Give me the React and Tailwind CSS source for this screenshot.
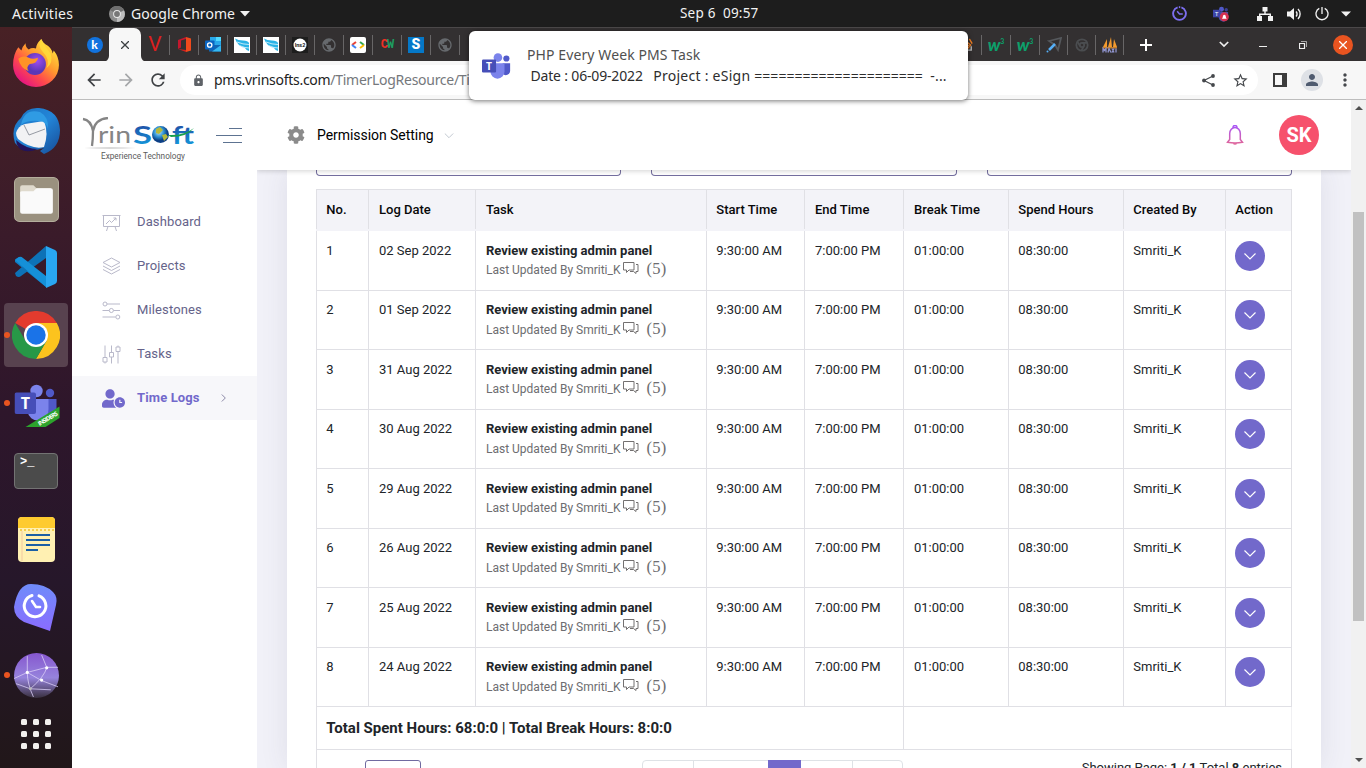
import React from "react";
import {
  MdArrowBack, MdArrowForward, MdRefresh, MdLock, MdStarBorder, MdMoreVert, MdPerson, MdPublic,
} from "react-icons/md";
import { FaCog, FaUserClock } from "react-icons/fa";

const UI = "font-['Noto_Sans',sans-serif]";

/* ---------- desktop top bar ---------- */

function TeamsMark({ className }) {
  return (
    <svg viewBox="0 0 32 28" className={className}>
      <circle cx="17" cy="5" r="4.6" fill="#7b83eb" />
      <circle cx="26" cy="6" r="3.3" fill="#5059c9" />
      <path d="M22 11h8v8a4.5 4.5 0 0 1-8 3z" fill="#5059c9" />
      <path d="M9 11h15v9a7.5 7.5 0 0 1-15 0z" fill="#7b83eb" />
      <rect x="0" y="7" width="15" height="14" rx="1.2" fill="#464eb8" />
      <text x="7.5" y="18" fontSize="11" fontWeight="700" textAnchor="middle" fill="#fff" fontFamily="Open Sans, sans-serif">T</text>
    </svg>
  );
}

function TopBar() {
  return (
    <div className={`relative flex h-[27px] shrink-0 items-center bg-[#1d1d1d] text-[14px] text-[#f2f2f2] ${UI}`}>
      <span className="ml-3 w-[97px] tracking-[0.3px]">Activities</span>
      <svg viewBox="0 0 16 16" className="h-4 w-4">
        <circle cx="8" cy="8" r="8" fill="#8d8d8d" />
        <path d="M8 8 1 4a8 8 0 0 1 14 0z" fill="#6f6f6f" />
        <path d="M8 8 15 4.500a8 8 0 0 1-7 11.500z" fill="#bdbdbd" />
        <circle cx="8" cy="8" r="3.900" fill="#e8e8e8" />
        <circle cx="8" cy="8" r="2.900" fill="#777" />
      </svg>
      <span className="ml-[6px] w-[109px] whitespace-nowrap tracking-[0.05px]">Google Chrome</span>
      <svg viewBox="0 0 10 6" className="h-[6px] w-[10px]"><path d="M0 0h10L5 5.500z" fill="#f2f2f2" /></svg>
      <span className="ml-[430px] whitespace-pre tracking-[0.2px] text-[13.500px]">{"Sep 6  09:57"}</span>
      <div className="absolute inset-y-0 right-[15px] flex items-center">
        <svg viewBox="0 0 16 16" className="mr-[26px] h-[15px] w-[15px]" fill="none" stroke="#7d6ff0" strokeWidth="2">
          <path d="M6 1.500a6.800 6.800 0 1 0 4 0" /><path d="M5.500 5.500 8 8.500h3.500" strokeWidth="1.600" /><path d="M7.300 1.200h1.500" />
        </svg>
        <svg viewBox="0 0 18 16" className="mr-[27px] h-4 w-[17px]">
          <circle cx="9" cy="3" r="2.600" fill="#5059c9" /><circle cx="14" cy="3.500" r="1.800" fill="#3c3f94" />
          <path d="M6 6h10v4a4 4 0 0 1-10 2z" fill="#4b52a8" />
          <rect x="0" y="3.500" width="8" height="8" fill="#3c45a8" />
          <text x="4" y="10" fontSize="6.500" textAnchor="middle" fill="#fff" fontFamily="Open Sans">T</text>
          <circle cx="12" cy="11" r="4.800" fill="#d5304f" />
          <path d="M9.500 13q1-1 1-2.500a1.500 1.800 0 0 1 3 0q0 1.500 1 2.500z" fill="#fff" />
        </svg>
        <svg viewBox="0 0 16 14" className="mr-[14px] h-[14px] w-4" fill="#f2f2f2">
          <path d="M5.500 0h5v4.500H8.700v2H14V9h2v5h-5V9h1.500V8h-9v1H5v5H0V9h2V6.500h5.300v-2H5.500z" />
        </svg>
        <svg viewBox="0 0 15 14" className="mr-[13px] h-[14px] w-[15px]" fill="none" stroke="#f2f2f2">
          <path d="M0 4.500h3L7 1v12L3 9.500H0z" fill="#f2f2f2" stroke="none" />
          <path d="M9 4.500a3.500 3.500 0 0 1 0 5" strokeWidth="1.400" /><path d="M11 2a7 7 0 0 1 0 10" strokeWidth="1.400" />
        </svg>
        <svg viewBox="0 0 14 14" className="mr-[12px] h-[14px] w-[14px]" fill="none" stroke="#f2f2f2" strokeWidth="1.300">
          <path d="M4.300 1.400a6 6 0 1 0 5.400 0M7 0v7" />
        </svg>
        <svg viewBox="0 0 10 6" className="h-[6px] w-[10px]"><path d="M0 .5h10L5 5.500z" fill="#f2f2f2" /></svg>
      </div>
    </div>
  );
}

/* ---------- dock ---------- */

function DockSlot({ dot, active, children }) {
  return (
    <div className="relative flex h-[68px] w-[72px] items-center justify-center">
      {active && <div className="absolute inset-x-1 inset-y-[2px] rounded-[4px] bg-[#58424f]" />}
      {dot && <div className="absolute left-1 top-[31px] h-[6px] w-[6px] rounded-full bg-[#e95420]" />}
      <div className="relative flex">{children}</div>
    </div>
  );
}

function Dock() {
  return (
    <div className="flex w-[72px] shrink-0 flex-col bg-[linear-gradient(#482125,#3a1b2a_28%,#2e162b_52%,#26172a_75%,#211719)] pt-[2px]">
      <DockSlot>
        <svg viewBox="0 0 46 46" className="h-[48px] w-[48px]">
          <defs>
            <linearGradient id="ff" x1=".85" y1=".1" x2=".2" y2=".9"><stop offset="0" stopColor="#ffe33d" /><stop offset=".4" stopColor="#ff9a2e" /><stop offset=".7" stopColor="#ff4a4c" /><stop offset="1" stopColor="#e6187f" /></linearGradient>
            <radialGradient id="ffg" cx=".6" cy=".35"><stop offset="0" stopColor="#a04df0" /><stop offset="1" stopColor="#5b37b7" /></radialGradient>
          </defs>
          <path d="M28 0q-5 5-5 9-4-1-7 1-3-2-3-6-3 3-4 7L6 8Q1 15 1 25a22 21 0 0 0 44 0q0-8-5-14l-1 3Q38 8 32 5 29 3 28 0z" fill="url(#ff)" />
          <circle cx="22" cy="24" r="10.500" fill="url(#ffg)" />
          <path d="M6 19q5-4 10-1 4 2 9 0-1 6-8 6-4 3-1 7-8-3-10-12z" fill="#ff9327" />
          <path d="M28 0q-4 7 2 13 7 7 3 15 7-5 4-14Q32 8 28 0z" fill="#ffdc3b" opacity=".85" />
        </svg>
      </DockSlot>
      <DockSlot>
        <svg viewBox="0 0 48 48" className="h-[48px] w-[48px]">
          <defs><linearGradient id="tb" x1="0" y1="0" x2="1" y2="1"><stop offset="0" stopColor="#1b72bf" /><stop offset=".5" stopColor="#2385d8" /><stop offset="1" stopColor="#174a94" /></linearGradient></defs>
          <path d="M9 11Q14 0 27 1q20 2 21 22 0 18-16 24l-4-3 4-3-8 2Q9 44 3 36-2 20 9 11z" fill="url(#tb)" />
          <path d="M4 26Q6 19 13 17l19-3q5 12 0 26-12 3-26-8-2-3-2-6z" fill="#f2f2f4" />
          <path d="m12 18 5 10 16-6" fill="none" stroke="#8a8f98" strokeWidth=".9" />
          <path d="M9 18Q12 1 28 5q9 5 8 17-2-8-9-8Q15 13 9 18z" fill="#2f9be4" />
          <path d="M4 33q10 9 22 9-12 5-19-1-3-4-3-8z" fill="#22145c" />
        </svg>
      </DockSlot>
      <DockSlot>
        <svg viewBox="0 0 44 44" className="h-[45px] w-[45px]">
          <rect x=".5" y=".5" width="43" height="43" rx="5" fill="#9a917f" stroke="#b5ae9d" />
          <path d="M6 10a2 2 0 0 1 2-2h11l3 3h14v8H6z" fill="#dfdacd" />
          <path d="M6 15q0-1 2-1h11l3-3h14a2 2 0 0 1 2 2v21a2 2 0 0 1-2 2H8a2 2 0 0 1-2-2z" fill="#fafafa" />
        </svg>
      </DockSlot>
      <DockSlot>
        <svg viewBox="0 0 42 42" className="h-[42px] w-[42px]">
          <path d="M0 14q0-1 4-3l27 22v8L0 16z" fill="#0f7dc4" />
          <path d="M31 0 0 27l1 3q3 2 5 0l25-18z" fill="#0d72b7" />
          <path d="M31 41 0 14l4-3q2-1 4 1l23 18z" fill="#1590d8" />
          <path d="m31 0 9 4q2 1 2 3v28q0 2-2 3l-9 4z" fill="#29a7f2" />
        </svg>
      </DockSlot>
      <DockSlot dot active>
        <svg viewBox="0 0 48 48" className="h-[48px] w-[48px]">
          <path d="M24 24 3.200 12a24 24 0 0 1 41.600 0z" fill="#e33b2e" />
          <path d="M24 12h20.800A24 24 0 0 1 24 48l10.400-18z" fill="#fcc31e" />
          <path d="m13.600 30 20.800 0L24 48A24 24 0 0 1 3.200 12z" fill="#279847" />
          <circle cx="24" cy="24" r="12" fill="#fff" /><circle cx="24" cy="24" r="9.700" fill="#1a73e8" />
        </svg>
      </DockSlot>
      <DockSlot dot>
        <svg viewBox="0 0 46 44" className="h-[44px] w-[46px] translate-x-[1.500px] translate-y-[3px]">
          <circle cx="22" cy="7" r="6.200" fill="#7b83eb" /><circle cx="35.500" cy="9" r="4.200" fill="#5059c9" />
          <path d="M32 15h10v12a7 7 0 0 1-9 5z" fill="#5059c9" />
          <path d="M13 15h21v10a10.500 10.500 0 0 1-21 2z" fill="#7b83eb" />
          <rect x="0" y="8.500" width="21.500" height="21.500" rx="2" fill="#464eb8" />
          <text x="10.800" y="25" fontSize="16" fontWeight="700" textAnchor="middle" fill="#fff" fontFamily="Open Sans">T</text>
          <path d="m11 43 34-20.500V34L31 43z" fill="#2ca32c" />
          <text x="0" y="0" fontSize="6" fontWeight="700" fill="#fff" fontFamily="Open Sans" transform="translate(25 42) rotate(-31)" textLength="22">INSIDERS</text>
        </svg>
      </DockSlot>
      <DockSlot>
        <div className="h-[36px] w-[44px] rounded-[4px] border border-[#737373] bg-[#4b4b4b] pl-[5px] font-['Liberation_Mono',monospace] text-[12px] font-bold leading-[16px] text-white">&gt;_</div>
      </DockSlot>
      <DockSlot>
        <svg viewBox="0 0 37 45" className="h-[45px] w-[37px]">
          <rect width="37" height="45" rx="4" fill="#fff0b2" /><path d="M4 0h29a4 4 0 0 1 4 4v7H0V4a4 4 0 0 1 4-4z" fill="#fecb2f" />
          <path d="M2 13h34" stroke="#f4cd4d" strokeWidth="2" strokeDasharray="2 2" /><path d="M4 14v30" stroke="#f3c9a0" />
          <path d="M8 18h24M8 23h24M8 28h24M8 33h12" stroke="#1b5fa5" strokeWidth="2" />
        </svg>
      </DockSlot>
      <DockSlot>
        <svg viewBox="0 0 44 47" className="h-[47px] w-[44px]">
          <defs><linearGradient id="ck" x1="0" y1="0" x2="0" y2="1"><stop offset="0" stopColor="#6f8cfa" /><stop offset="1" stopColor="#8a6cff" /></linearGradient></defs>
          <path d="M17 0q14 0 22 8 5 5 3 13l-6 26-26-9Q0 33 0 23 4 0 17 0z" fill="url(#ck)" />
          <path d="M19.500 10.500a10.800 10.800 0 1 0 7 .3" fill="none" stroke="#fff" strokeWidth="3" strokeLinecap="round" transform="translate(-1.500 1)" />
          <path d="m18 17 4 6h4" fill="none" stroke="#fff" strokeWidth="2.600" strokeLinecap="round" />
        </svg>
      </DockSlot>
      <DockSlot dot>
        <svg viewBox="0 0 44 44" className="h-[45px] w-[45px]">
          <defs><linearGradient id="gl" x1="0" y1="0" x2="0" y2="1"><stop offset="0" stopColor="#8657cf" /><stop offset=".55" stopColor="#9683dc" /><stop offset="1" stopColor="#39303f" /></linearGradient></defs>
          <circle cx="22" cy="22" r="22" fill="url(#gl)" />
          <path d="M13 3v16l14 8 16 6M13 19 0 25M13 19l19-5 11 0M32 14Q30 23 16 35L2 30M32 14 27 2M13 19q0 11 6 24M16 35l20 1" fill="none" stroke="#d8ccf5" strokeWidth=".8" />
          <g fill="#fff"><circle cx="13" cy="19" r="1.600" /><circle cx="32" cy="14.500" r="1.600" /><circle cx="27" cy="26.500" r="1.600" /><circle cx="16" cy="35" r="1.400" fill="#bbb" /></g>
        </svg>
      </DockSlot>
      <div className="mx-auto mt-[10px] grid w-[30px] grid-cols-3 gap-[6px]">
        {Array.from({ length: 9 }, (_, i) => <div key={i} className="h-[6px] w-[6px] rounded-[1.500px] bg-[#f2f0ee]" />)}
      </div>
    </div>
  );
}

/* ---------- browser chrome ---------- */

function Fav({ w = "w-[29px]", children }) {
  return (
    <div className={`flex h-5 shrink-0 items-center justify-center border-r border-[#686667] ${w}`}>{children}</div>
  );
}

function Wing() {
  return (
    <svg viewBox="0 0 16 16" className="h-4 w-4">
      <rect width="16" height="16" fill="#fff" />
      <path d="M1 1.500q3 2 8 2 5 0 6 2.500V14q-3-1-4.500-3.500Q8 10.500 5 8 2.500 6 1 1.500z" fill="#29b3e6" />
      <path d="M3 5q6 2.500 12 2.500M6 8.800q5 2.200 9 2.200" stroke="#fff" strokeWidth=".7" fill="none" />
    </svg>
  );
}

function W3() {
  return (
    <div className="flex items-start font-['Lato',sans-serif] leading-none text-[#0d9f6b]">
      <span className="text-[17px] font-black italic leading-[13px]">w</span><span className="text-[7px] font-bold">3</span>
    </div>
  );
}

function TabStrip() {
  return (
    <div className="flex h-[34px] shrink-0 items-center border-t border-[#4b4849] bg-[#333031]">
      <div className="ml-[8px] flex w-[29px] justify-center">
        <div className="flex h-4 w-4 items-center justify-center rounded-full bg-[#1273de] font-['Lato',sans-serif] text-[12px] font-black text-white">k</div>
      </div>
      <div className="relative flex h-[34px] w-8 items-center justify-center rounded-t-[7px] bg-[#f7f7f7]">
        <svg viewBox="0 0 8 8" className="h-2 w-2" stroke="#3c4043" strokeWidth="1.300"><path d="m0 0 8 8M8 0 0 8" /></svg>
        <svg viewBox="0 0 6 6" className="absolute -left-[6px] bottom-0 h-[6px] w-[6px]"><path d="M6 0v6H0a6 6 0 0 0 6-6z" fill="#f7f7f7" /></svg>
        <svg viewBox="0 0 6 6" className="absolute -right-[6px] bottom-0 h-[6px] w-[6px]"><path d="M0 0v6h6a6 6 0 0 1-6-6z" fill="#f7f7f7" /></svg>
      </div>
      <Fav><span className="font-['Roboto',sans-serif] text-[21px] leading-none text-[#dc1f1f]">V</span></Fav>
      <Fav>
        <svg viewBox="0 0 13 15" className="h-[15px] w-[13px]"><path d="M8 0 0 3v9l3-1.500v-7L8 2z" fill="#c4172d" /><path d="M8 0 13 1.500v12L8 15z" fill="#f04a1c" /><path d="m0 12 8 1v2z" fill="#d1211f" /></svg>
      </Fav>
      <Fav>
        <svg viewBox="0 0 16 16" className="h-4 w-4"><rect x="5" width="11" height="9" fill="#28a8ea" /><path d="M11 0h5v4h-5z" fill="#50d9ff" /><path d="M4 8h12v6.500H4z" fill="#1066b5" /><path d="m16 8-9 6.500h9z" fill="#35b8f1" /><rect y="3.500" width="9.500" height="9" rx=".8" fill="#0a64c0" /><circle cx="4.700" cy="8" r="2.200" fill="none" stroke="#fff" strokeWidth="1.300" /></svg>
      </Fav>
      <Fav><Wing /></Fav>
      <Fav><Wing /></Fav>
      <Fav>
        <svg viewBox="0 0 16 16" className="h-4 w-4"><rect width="16" height="16" fill="#1d1d1d" /><circle cx="8" cy="8" r="6.500" fill="#fff" /><text x="8" y="10" fontSize="5.500" fontWeight="700" textAnchor="middle" fill="#222" fontFamily="Roboto">Ins2</text></svg>
      </Fav>
      <Fav><MdPublic size={16} color="#66696d" /></Fav>
      <Fav>
        <svg viewBox="0 0 16 16" className="h-4 w-4" fill="none" strokeWidth="2"><rect width="16" height="16" rx="2" fill="#fff" /><path d="m6 5-4 3" stroke="#ea4335" /><path d="m2 8 4 3" stroke="#4285f4" /><path d="m10 5 4 3" stroke="#34a853" /><path d="m14 8-4 3" stroke="#fbbc04" /></svg>
      </Fav>
      <Fav><span className="font-['Liberation_Mono',monospace] text-[12px] font-bold leading-none tracking-[-1px] text-[#ee3124]">C<span className="text-[#1d9f62]">W</span></span></Fav>
      <Fav><div className="flex h-4 w-4 items-center justify-center bg-[#0578c8] font-['Roboto',sans-serif] text-[14px] font-black text-white">S</div></Fav>
      <Fav><MdPublic size={16} color="#66696d" /></Fav>
      <div className="w-[493px] shrink-0" />
      <Fav>
        <svg viewBox="0 0 14 16" className="h-[15px] w-[13px]" fill="none"><path d="M1 10v4h10v-4" stroke="#bcbbbb" strokeWidth="1.500" /><path d="M3 11.500h6M4 8l6 2M6 5l5 4M9 2l3 5" stroke="#f48024" strokeWidth="1.500" /></svg>
      </Fav>
      <Fav><W3 /></Fav>
      <Fav><W3 /></Fav>
      <Fav w="w-[28px]">
        <svg viewBox="0 0 16 16" className="h-4 w-4" fill="none"><path d="m3 4 12-3-3 12-3-5z" stroke="#55585c" strokeWidth="1.800" /><path d="m3 13 6-6" stroke="#55aef5" strokeWidth="2.500" /><circle cx="1.500" cy="14.500" r="1" fill="#55aef5" /></svg>
      </Fav>
      <Fav w="w-[28px]">
        <svg viewBox="0 0 16 16" className="h-[14px] w-[14px]" fill="none" stroke="#4b4d50" strokeWidth="2"><circle cx="8" cy="8" r="6.500" /><circle cx="8" cy="8" r="2.500" /><path d="M8 5.500h6M5.800 9.300 3 4.500M10.200 9.300 7.500 14" /></svg>
      </Fav>
      <Fav w="w-[28px]">
        <svg viewBox="0 0 16 16" className="h-4 w-4"><path d="m1 10 4-8v8zM6 10l3-10 1 10zM11 10l1-8 3 8z" fill="#f39a2e" /><path d="M1 10h14v1.500H1z" fill="#c77f2b" /><path d="M1 15.500v-4l1.500 2 1.500-2v4m2 0 1-4 2 4m1-4 2 4m0-4-2 4m4-4v4" fill="none" stroke="#8f93cc" strokeWidth="1.300" /></svg>
      </Fav>
      <div className="flex w-[44px] justify-center">
        <svg viewBox="0 0 12 12" className="h-3 w-3" stroke="#fff" strokeWidth="2"><path d="M6 0v12M0 6h12" /></svg>
      </div>
      <div className="ml-auto flex shrink-0 items-center pr-[3px]">
        <div className="flex w-10 justify-center"><svg viewBox="0 0 10 7" className="ml-[1px] h-[7px] w-[10px]" fill="none" stroke="#eee" strokeWidth="1.700"><path d="m.8 1 4.200 4L9.200 1" /></svg></div>
        <div className="flex w-10 justify-center"><div className="mt-[4px] h-px w-2 bg-[#eee]" /></div>
        <div className="flex w-10 justify-center"><svg viewBox="0 0 8 8" className="h-2 w-2" fill="none" stroke="#eee"><path d="M.5 2.500h5v5h-5z" strokeWidth="1.200" /><path d="M2 .5h5.500V6" strokeWidth=".9" opacity=".7" /></svg></div>
        <div className="flex w-10 justify-center"><div className="flex h-5 w-5 items-center justify-center rounded-full bg-[#e95420]"><svg viewBox="0 0 8 8" className="h-2 w-2" stroke="#fff" strokeWidth="1.300"><path d="m0 0 8 8M8 0 0 8" /></svg></div></div>
      </div>
    </div>
  );
}

function Toolbar() {
  return (
    <div className={`flex h-[39px] shrink-0 items-center border-b border-[#bdbdbd] bg-[#f7f7f7] ${UI}`}>
      <MdArrowBack size={20} className="ml-[12px]" color="#3f4245" />
      <MdArrowForward size={20} className="ml-[12px]" color="#a5a7a9" />
      <MdRefresh size={20} className="ml-[12px]" color="#3f4245" />
      <div className="ml-[12px] flex h-[30px] w-[1078px] items-center rounded-full bg-white">
        <MdLock size={13} className="ml-[12px]" color="#5f6368" />
        <span className="-mt-[2px] ml-[9px] whitespace-nowrap text-[14px] tracking-[-0.28px] text-[#222]">pms.vrinsofts.com<span className="text-[#75787c]">/TimerLogResource/TimerLog</span></span>
        <div className="ml-auto mr-[9px] flex items-center gap-[17px]">
          <svg viewBox="0 0 13 13" className="h-[13px] w-[13px]"><path d="m11 2-9 4.500 9 4.500" fill="none" stroke="#45484c" strokeWidth="1.200" /><g fill="#45484c"><circle cx="11" cy="2" r="1.900" /><circle cx="2" cy="6.500" r="1.900" /><circle cx="11" cy="11" r="1.900" /></g></svg>
          <MdStarBorder size={17} color="#45484c" />
        </div>
      </div>
      <div className="ml-[15px] h-[14px] w-[14px] border-2 border-r-[5px] border-[#3c3c3c]" />
      <div className="ml-[14px] flex h-[22px] w-[22px] items-center justify-center rounded-full bg-[#dee1e6]"><MdPerson size={18} color="#4f5b70" /></div>
      <MdMoreVert size={20} className="ml-[12px]" color="#45484c" />
    </div>
  );
}

function Notification() {
  return (
    <div className={`absolute left-[469px] top-[31px] z-30 flex h-[69px] w-[499px] items-center rounded-[6px] bg-white shadow-[0_1px_5px_rgba(0,0,0,0.55)] ${UI}`}>
      <TeamsMark className="ml-[13px] h-[28px] w-[30px]" />
      <div className="-mt-[2px] ml-[15px] whitespace-pre text-[14px] leading-[21px] text-[#2d2d2d]">
        <div className="tracking-[0.1px] text-[#505050]">PHP Every Week PMS Task</div>
        <div>
          <span className="tracking-[-0.17px]">{" Date : 06-09-2022   "}</span>
          <span className="tracking-[0.27px]">{"Project : eSign "}</span>
          <span className="tracking-[0.020px]">{"=====================  "}</span>
          <span className="tracking-[0.2px]">-...</span>
        </div>
      </div>
    </div>
  );
}

/* ---------- web page ---------- */

function Logo() {
  return (
    <svg viewBox="0 0 116 48" className="h-12 w-[116px]">
      <defs>
        <linearGradient id="so" x1="0" y1="0" x2="0" y2="1"><stop offset="0" stopColor="#223f9a" /><stop offset="1" stopColor="#12a2e2" /></linearGradient>
        <radialGradient id="ea" cx=".4" cy=".35"><stop offset="0" stopColor="#b9e6ff" /><stop offset=".6" stopColor="#2b8ed0" /><stop offset="1" stopColor="#0c3f86" /></radialGradient>
      </defs>
      <path d="M1 2q8 1 10 12M26 1q-13 1-15 13 0 8-1 15" fill="none" stroke="#858585" strokeWidth="2.300" />
      <text x="16" y="26" fontSize="24" fill="#858585" fontFamily="Lato, sans-serif" textLength="33" lengthAdjust="spacingAndGlyphs">rin</text>
      <text x="51" y="26.500" fontSize="24" fontWeight="700" fill="url(#so)" fontFamily="Lato, sans-serif" textLength="19" lengthAdjust="spacingAndGlyphs">S</text>
      <text x="90" y="26.500" fontSize="24" fontWeight="700" fill="url(#so)" fontFamily="Lato, sans-serif" textLength="22" lengthAdjust="spacingAndGlyphs">ft</text>
      <circle cx="78.500" cy="17.500" r="8.500" fill="url(#ea)" />
      <path d="m74 12 4-2 3 3-4 4-3-1zM80 18l4-1 2 3-4 4z" fill="#b5b93c" />
      <path d="M86 18q16 1 26-7-7 9-23 9z" fill="#17a04b" />
      <path d="M2 31q26-1.500 52 0-26 1.500-52 0z" fill="#ccc" />
      <text x="19" y="42" fontSize="8.500" fill="#5b5b5b" fontFamily="Roboto, sans-serif" textLength="84" lengthAdjust="spacingAndGlyphs">Experience Technology</text>
    </svg>
  );
}

const NAV = [
  ["Dashboard", <path key="a" d="M.5 2.500h18M1.500 2.500v11h16v-11M4 11l3.500-3.500 2 2L14 5m-2.500 0H14v2.500M6 13.500 4.500 18m8.500-4.500 1.500 4.500" />],
  ["Projects", <path key="b" d="m9.500 1 8.500 4.500-8.500 4.500L1 5.500zM1 9l8.500 4.500L18 9M1 12.500 9.500 17l8.500-4.500" />],
  ["Milestones", <path key="c" d="M5 3h13M.5 9.500h6.700M11.500 9.500H18M.5 16h13M5 3a2 2 0 1 1-4 0 2 2 0 0 1 4 0zM11.400 9.500a2 2 0 1 1-4.100 0 2 2 0 0 1 4.100 0zM17.800 16a2 2 0 1 1-4 0 2 2 0 0 1 4 0z" />],
  ["Tasks", <path key="d" d="M3 .5v12M3 17v1.500M1 12.500h4V17H1zM9.500.5v7M9.500 12v6.500M7.500 7.500h4V12h-4zM16 .5v1.500M16 6.500v12M14 2h4v4.500h-4z" />],
];

function Sidebar() {
  return (
    <div className="flex w-[185px] shrink-0 flex-col bg-white font-['Roboto',sans-serif] text-[13px]">
      <div className="flex h-[100px] items-start pl-[10px] pt-[17px]">
        <Logo />
        <div className="ml-[18px] mt-[11px] flex w-[26px] flex-col items-end gap-[6px]">
          <div className="h-px w-[13px] bg-[#5d7391]" /><div className="h-px w-[26px] bg-[#5d7391]" /><div className="h-px w-[19px] bg-[#5d7391]" />
        </div>
      </div>
      {NAV.map(([name, d]) => (
        <div key={name} className="flex h-11 items-center pl-[30px] text-[#65638a]">
          <svg viewBox="0 0 19 19" className="h-[19px] w-[19px]" fill="none" stroke="#b9b9ca">{d}</svg>
          <span className="ml-4 tracking-[0.13px]">{name}</span>
        </div>
      ))}
      <div className="flex h-11 items-center bg-[#f7f7fa] pl-[30px] font-bold text-[#7269cb]">
        <FaUserClock size={23} />
        <span className="ml-[12px] tracking-[0.13px]">Time Logs</span>
        <svg viewBox="0 0 5 8" className="ml-[21px] h-2 w-[5px]" fill="none" stroke="#8a88a6"><path d="m.8.5 3.500 3.500-3.500 3.500" /></svg>
      </div>
    </div>
  );
}

function AppHeader() {
  return (
    <div className="relative z-10 flex h-[70px] shrink-0 items-center bg-white font-['Roboto',sans-serif] shadow-[0_1px_5px_rgba(0,0,0,0.18)]">
      <FaCog size={18} className="ml-[30px]" color="#8b8b8b" />
      <span className="ml-[12px] text-[14px] tracking-[-0.05px] text-black">Permission Setting</span>
      <svg viewBox="0 0 10 6" className="ml-[10px] mt-[2px] h-[6px] w-[10px]" fill="none" stroke="#c2c9d1"><path d="m.8.500 4.200 4.200L9.200.500" /></svg>
      <svg viewBox="0 0 18 20" className="ml-auto mr-[35px] h-5 w-[18px]" fill="none">
        <defs><linearGradient id="be" x1="0" y1="0" x2="0" y2="1"><stop offset="0" stopColor="#a855f7" /><stop offset="1" stopColor="#e0669a" /></linearGradient></defs>
        <path d="M3.700 14.500V8.500a5.300 6 0 0 1 10.600 0V14.500l2.200 2.700q-7.500 1.600-15 0zM7 2.500a2 2 0 0 1 4 0M7 18q2 2 4 0" stroke="url(#be)" strokeWidth="1.500" />
      </svg>
      <div className="mr-8 flex h-10 w-10 items-center justify-center rounded-full bg-[#f6516c] text-[20px] font-bold text-white">SK</div>
    </div>
  );
}

const COLS = "grid grid-cols-[52px_107px_231px_98px_99px_105px_115px_102px_67px]";
const CELL = "border-l border-[#e0e0e5] pl-[9.300px]";
const CELL_WIDE = "border-l border-[#e0e0e5] pl-[10px]";
const HEAD = ["No.", "Log Date", "Task", "Start Time", "End Time", "Break Time", "Spend Hours", "Created By", "Action"];
const WIDE = [1, 2, 4, 5];
const ROWS = [
  ["02 Sep 2022", "h-[59px] pt-[11px]", "-mt-[1px]"],
  ["01 Sep 2022", "h-[59px] pt-[10px] border-t", "mt-0"],
  ["31 Aug 2022", "h-[60px] pt-[11px] border-t", "-mt-[1px]"],
  ["30 Aug 2022", "h-[59px] pt-[10px] border-t", "mt-0"],
  ["29 Aug 2022", "h-[60px] pt-[11px] border-t", "-mt-[1px]"],
  ["26 Aug 2022", "h-[59px] pt-[10px] border-t", "mt-0"],
  ["25 Aug 2022", "h-[60px] pt-[11px] border-t", "-mt-[1px]"],
  ["24 Aug 2022", "h-[59px] pt-[10px] border-t", "mt-0"],
];

function ChatIcon() {
  return (
    <svg viewBox="0 0 16 14" className="-mt-[3px] ml-[3px] h-[14px] w-4" fill="none" stroke="#737070">
      <path d="M.5 1.500h10.500v7.500H6L3.500 11.500V9h-3z" /><path d="M13 3.500h2v7h-2v2l-2.500-2H7" />
    </svg>
  );
}

function LogTable() {
  return (
    <div className="mt-[13px] text-[13px] leading-[18px] text-[#212529]">
      <div className={`${COLS} h-[42px] border-t border-r border-[#e0e0e5] bg-[#f3f3f8] font-medium text-[#08080a]`}>
        {HEAD.map((h, i) => <div key={h} className={`${WIDE.includes(i) ? CELL_WIDE : CELL} mb-[2px] pt-[11px]`}>{h}</div>)}
      </div>
      {ROWS.map(([date, h, sub], i) => {
        const c = `${CELL} ${h}`;
        const w = `${CELL_WIDE} ${h}`;
        return (
          <div key={date} className={`${COLS} border-r border-[#e0e0e5]`}>
            <div className={c}>{i + 1}</div>
            <div className={w}>{date}</div>
            <div className={w}>
              <div className="font-bold">Review existing admin panel</div>
              <div className={`${sub} flex items-center whitespace-nowrap text-[12px] text-[#6d6d70]`}>
                <span className="mt-[2px]">Last Updated By Smriti_K</span>
                <ChatIcon />
                <span className="ml-[7px] -mt-px font-['Liberation_Serif',serif] text-[16.500px] tracking-[0.2px]">(5)</span>
              </div>
            </div>
            <div className={c}>9:30:00 AM</div>
            <div className={w}>7:00:00 PM</div>
            <div className={w}>01:00:00</div>
            <div className={c}>08:30:00</div>
            <div className={c}>Smriti_K</div>
            <div className={c}>
              <div className="-mt-px flex h-[30px] w-[30px] items-center justify-center rounded-full bg-[#7269cb]">
                <svg viewBox="0 0 12 7" className="mt-[1px] h-[7px] w-3" fill="none" stroke="#fff" strokeWidth="1.200"><path d="m.5.500 5.500 5.500L11.500.500" /></svg>
              </div>
            </div>
          </div>
        );
      })}
      <div className="grid h-[43px] grid-cols-[587px_389px] border-t border-[#e0e0e5]">
        <div className="border-l border-[#e0e0e5] pl-[9.300px] pt-[12px] text-[15px] font-bold">Total Spent Hours: 68:0:0 | Total Break Hours: 8:0:0</div>
        <div className="border-x border-[#e0e0e5] border-r-[#f0f0f3]" />
      </div>
      <div className="flex h-[60px] items-start border border-b-0 border-[#e0e0e5] pt-[10px]">
        <div className="ml-[48px] h-10 w-[56px] rounded-[3px] border border-[#706aa0]" />
        <div className="ml-[221px] flex h-10 w-[261px] rounded-[4px] border border-[#dee2e6]">
          <div className="w-[51px] border-r border-[#dee2e6]" />
          <div className="w-[74px]" />
          <div className="-mt-px w-[33px] bg-[#7269cb]" />
          <div className="w-[52px] border-r border-[#dee2e6]" />
        </div>
        <div className="-mt-px ml-auto mr-[9px]">Showing Page: <b>1 / 1</b> Total <b>8</b> entries</div>
      </div>
    </div>
  );
}

function Page() {
  return (
    <div className="flex min-h-0 flex-1">
      <Sidebar />
      <div className="flex min-w-0 flex-1 flex-col overflow-hidden bg-[#f1f1f8]">
        <AppHeader />
        <div className="mx-[30px] h-[598px] overflow-visible bg-white px-[29px] font-['Roboto',sans-serif] shadow-[0_0_26px_rgba(60,60,100,0.10)]">
          <div className="grid grid-cols-3 gap-[30px]">
            <div className="h-[6px] rounded-b-[4px] border border-t-0 border-[#746e9f]" />
            <div className="h-[6px] rounded-b-[4px] border border-t-0 border-[#746e9f]" />
            <div className="h-[6px] rounded-b-[4px] border border-t-0 border-[#746e9f]" />
          </div>
          <LogTable />
        </div>
      </div>
      <div className="flex w-[15px] shrink-0 flex-col items-center bg-[#f1f1f1]">
        <svg viewBox="0 0 8 4" className="mt-[6px] h-1 w-2"><path d="M0 4h8L4 0z" fill="#505050" /></svg>
        <div className="mt-[102px] h-[409px] w-[11px] bg-[#c1c1c1]" />
        <svg viewBox="0 0 8 4" className="mb-[6px] mt-auto h-1 w-2"><path d="M0 0h8L4 4z" fill="#505050" /></svg>
      </div>
    </div>
  );
}

export default function App() {
  return (
    <div className="relative flex h-[768px] w-[1366px] flex-col overflow-hidden bg-white">
      <TopBar />
      <div className="flex min-h-0 flex-1">
        <Dock />
        <div className="flex min-w-0 flex-1 flex-col">
          <TabStrip />
          <Toolbar />
          <Page />
        </div>
      </div>
      <Notification />
    </div>
  );
}
